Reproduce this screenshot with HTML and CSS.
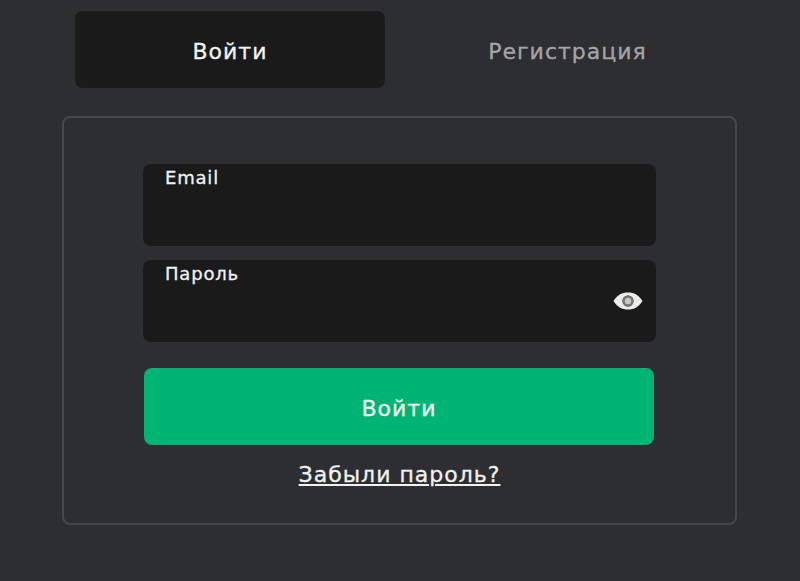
FILE: index.html
```html
<!DOCTYPE html>
<html lang="ru">
<head>
  <meta charset="UTF-8">
  <meta name="viewport" content="width=device-width, initial-scale=1">
  <title>Вход</title>
  <link rel="stylesheet" href="styles.css">
</head>
<body>

  <div class="tabs">
    <button class="tab active" type="button">Войти</button>
    <button class="tab" type="button">Регистрация</button>
  </div>

  <form class="card">
    <div class="field">
      <label for="email">Email</label>
      <input type="text" id="email">
    </div>

    <div class="field">
      <label for="password">Пароль</label>
      <input type="password" id="password">
      <svg class="eye" viewBox="0 0 30 18" aria-hidden="true">
        <path fill="#ecece8" fill-rule="evenodd" d="M0.5 9C4 3 9 0.500 15 0.500S26 3 29.500 9C26 15 21 17.500 15 17.500S4 15 0.500 9ZM15 3.500a5.500 5.500 0 1 0 0 11a5.500 5.500 0 0 0 0-11Z"/>
        <circle cx="15" cy="9" r="5.500" fill="#77756f"/>
        <circle cx="15" cy="9" r="3.200" fill="#c8c8c4"/>
      </svg>
    </div>

    <button class="submit" type="submit">Войти</button>
    <a class="forgot" href="#">Забыли пароль?</a>
  </form>

</body>
</html>
```

FILE: styles.css
```css
:root {
  --background-color: #2d2e32;
  --field-color: #1a1a1a;
  --border-color: #46474b;
  --primary-color: #00b574;
  --text-color: #f2f2f0;
  --muted-color: #a5a5a8;
}

* {
  box-sizing: border-box;
  margin: 0;
  padding: 0;
}

body {
  background-color: var(--background-color);
  color: var(--text-color);
  font-family: 'DejaVu Sans', sans-serif;
  letter-spacing: 1px;
  -webkit-text-stroke: 0.3px currentColor;
  min-height: 100vh;
  padding: 11px 63px 0 62px;
}

.tabs {
  display: grid;
  grid-template-columns: 310px 315px;
  column-gap: 25px;
  padding-left: 13px;
  margin-bottom: 28px;
}

.tab {
  height: 77px;
  padding-top: 4px;
  border: none;
  border-radius: 8px;
  background: none;
  color: var(--muted-color);
  font-family: inherit;
  font-size: 22px;
  letter-spacing: inherit;
}

.tab.active {
  background-color: var(--field-color);
  color: var(--text-color);
}

.card {
  display: flex;
  flex-direction: column;
  height: 409px;
  padding: 46px 79px 0;
  border: 2px solid var(--border-color);
  border-radius: 8px;
}

.field {
  position: relative;
  height: 82px;
  margin-bottom: 14px;
}

.field label {
  position: absolute;
  top: 3px;
  left: 22px;
  font-size: 18px;
  letter-spacing: 0.8px;
}

.field input {
  width: 100%;
  height: 100%;
  border: none;
  border-radius: 8px;
  background-color: var(--field-color);
}

.eye {
  position: absolute;
  top: 32px;
  right: 13px;
  width: 30px;
  height: 18px;
}

.submit {
  width: 510px;
  height: 77px;
  margin: 12px 0 0 1px;
  padding-top: 3px;
  border: none;
  border-radius: 8px;
  background-color: var(--primary-color);
  color: var(--text-color);
  font-family: inherit;
  font-size: 22px;
  letter-spacing: inherit;
}

.forgot {
  align-self: center;
  margin-top: 17px;
  color: var(--text-color);
  font-size: 22px;
}
```
